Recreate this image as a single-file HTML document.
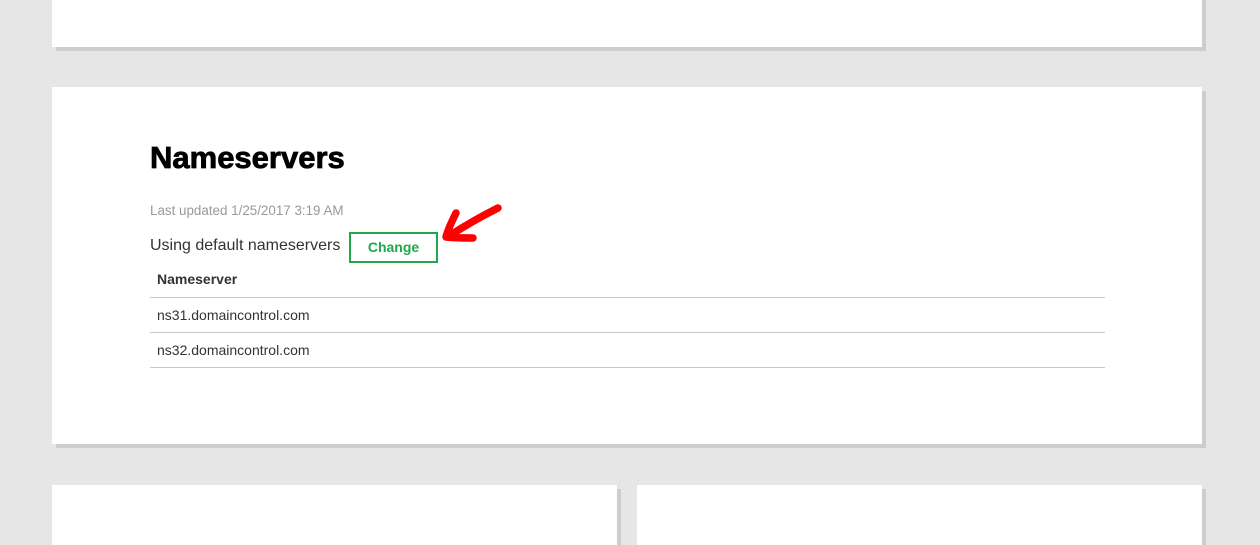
<!DOCTYPE html>
<html><head><style>
body{margin:0;width:1260px;height:531px;background:#e6e6e6;position:relative;overflow:hidden;font-family:"Liberation Sans",sans-serif}
.c{position:absolute;background:#fff;box-shadow:4px 4px 0 #cdcdcd}
h1{position:absolute;left:150px;top:140px;margin:0;font-size:31px;font-weight:900;letter-spacing:0px;color:#000;-webkit-text-stroke:0.8px #000}
.lu{position:absolute;left:150px;top:203px;font-size:13.4px;color:#999}
.ud{position:absolute;left:150px;top:237px;font-size:16px;color:#333}
.btn{position:absolute;left:349px;top:232px;width:85px;height:27px;border:2px solid #1ea74d;color:#1ea74d;font-weight:bold;font-size:14px;text-align:center;line-height:27px}
.row{position:absolute;left:150px;width:955px;border-bottom:1px solid #c8c8c8;font-size:14px;color:#333;padding-left:7px;box-sizing:border-box}
</style></head><body>
<div class="c" style="left:52px;top:-10px;width:1150px;height:57px"></div>
<div class="c" style="left:52px;top:87px;width:1150px;height:357px"></div>
<div class="c" style="left:52px;top:485px;width:565px;height:60px"></div>
<div class="c" style="left:637px;top:485px;width:565px;height:60px"></div>
<h1>Nameservers</h1>
<div class="lu">Last updated 1/25/2017 3:19 AM</div>
<div class="ud">Using default nameservers</div>
<div class="btn">Change</div>
<div class="row" style="top:271px;height:27px;font-weight:bold">Nameserver</div>
<div class="row" style="top:307px;height:26px">ns31.domaincontrol.com</div>
<div class="row" style="top:342px;height:26px">ns32.domaincontrol.com</div>
<svg style="position:absolute;left:0;top:0" width="1260" height="531">
<path d="M498 208 C482 216 466 225 449 236 M456 213 C452 221 448 229 446 237 C456 238 465 238 473 238" stroke="#f00" stroke-width="7.5" fill="none" stroke-linecap="round" stroke-linejoin="round"/>
</svg>
</body></html>
